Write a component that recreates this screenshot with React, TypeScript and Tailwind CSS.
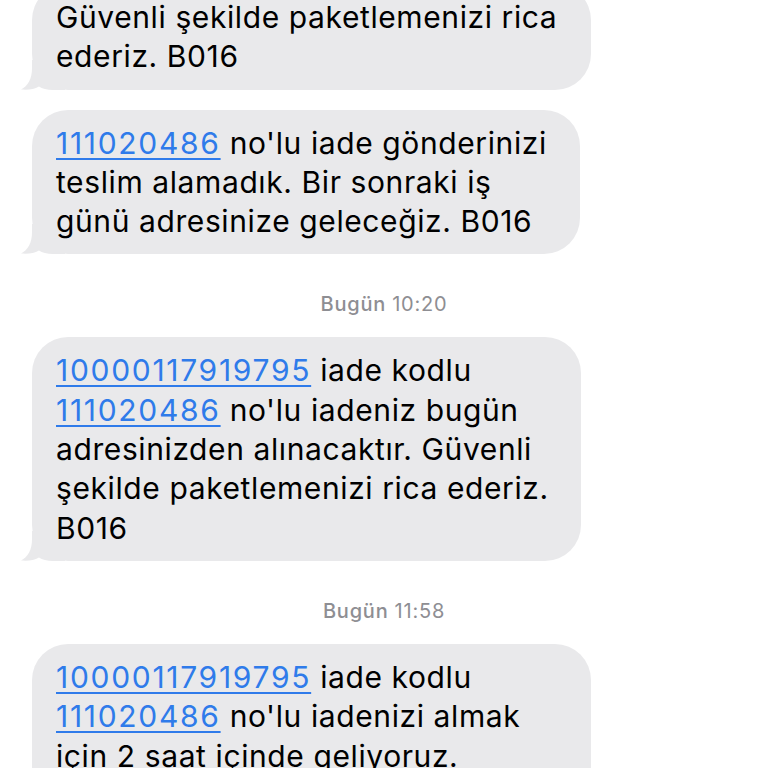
type Part = string | { link: string };

type Msg = { width: string; lines: Part[][]; cut?: boolean };

const Link = ({ children }: { children: string }) => (
  <span className="text-[#2f7bea] tracking-[1.7px] underline decoration-[1.5px] underline-offset-[4px]">{children}</span>
);

function Tail() {
  return (
    <svg
      className="absolute left-[-11px] bottom-0"
      width="44"
      height="30"
      viewBox="0 0 44 30"
      fill="#e9e9eb"
    >
      <path d="M11 0 L44 0 L44 30 L32 30 C26 30 21 28.5 18 26.5 C13 29.5 7 30 0 29.5 C7 26 11 19 11 8 Z" />
    </svg>
  );
}

function Bubble({ msg }: { msg: Msg }) {
  return (
    <div
      className={`relative ${msg.width} rounded-[36px] bg-[#e9e9eb] pl-6 pr-4 pt-[14px] pb-[13px] ${msg.cut ? "-mt-[16px]" : ""}`}
    >
      <Tail />
      <div className="relative text-[30px] leading-[39.3px] text-black tracking-[0.6px]">
        {msg.lines.map((line, i) => (
          <div key={i} className="whitespace-nowrap">
            {line.map((p, j) =>
              typeof p === "string" ? <span key={j}>{p}</span> : <Link key={j}>{p.link}</Link>
            )}
          </div>
        ))}
      </div>
    </div>
  );
}

function Stamp({ day, time }: { day: string; time: string }) {
  return (
    <div className="flex justify-center pt-[39px] pb-[22px] text-[20px] leading-[22px] tracking-[0.8px] text-[#8e8e93]">
      <span className="font-medium">{day}</span>
      <span className="ml-[6px]">{time}</span>
    </div>
  );
}

export default function App() {
  const m1: Msg = {
    width: "w-[559px]",
    cut: true,
    lines: [["Güvenli şekilde paketlemenizi rica"], ["ederiz. B016"]],
  };
  const m2: Msg = {
    width: "w-[548px]",
    lines: [
      [{ link: "111020486" }, " no'lu iade gönderinizi"],
      ["teslim alamadık. Bir sonraki iş"],
      ["günü adresinize geleceğiz. B016"],
    ],
  };
  const m3: Msg = {
    width: "w-[549px]",
    lines: [
      [{ link: "10000117919795" }, " iade kodlu"],
      [{ link: "111020486" }, " no'lu iadeniz bugün"],
      ["adresinizden alınacaktır. Güvenli"],
      ["şekilde paketlemenizi rica ederiz."],
      ["B016"],
    ],
  };
  const m4: Msg = {
    width: "w-[559px]",
    lines: [
      [{ link: "10000117919795" }, " iade kodlu"],
      [{ link: "111020486" }, " no'lu iadenizi almak"],
      ["için 2 saat içinde geliyoruz."],
      ["B016"],
    ],
  };

  return (
    <div className="h-[768px] w-[768px] overflow-hidden bg-white font-['Inter','Liberation_Sans',sans-serif]">
      <div className="flex flex-col items-start pl-[32px]">
        <Bubble msg={m1} />
        <div className="h-[20px]" />
        <Bubble msg={m2} />
        <div className="w-[704px]">
          <Stamp day="Bugün" time="10:20" />
        </div>
        <Bubble msg={m3} />
        <div className="w-[704px]">
          <Stamp day="Bugün" time="11:58" />
        </div>
        <Bubble msg={m4} />
      </div>
    </div>
  );
}
